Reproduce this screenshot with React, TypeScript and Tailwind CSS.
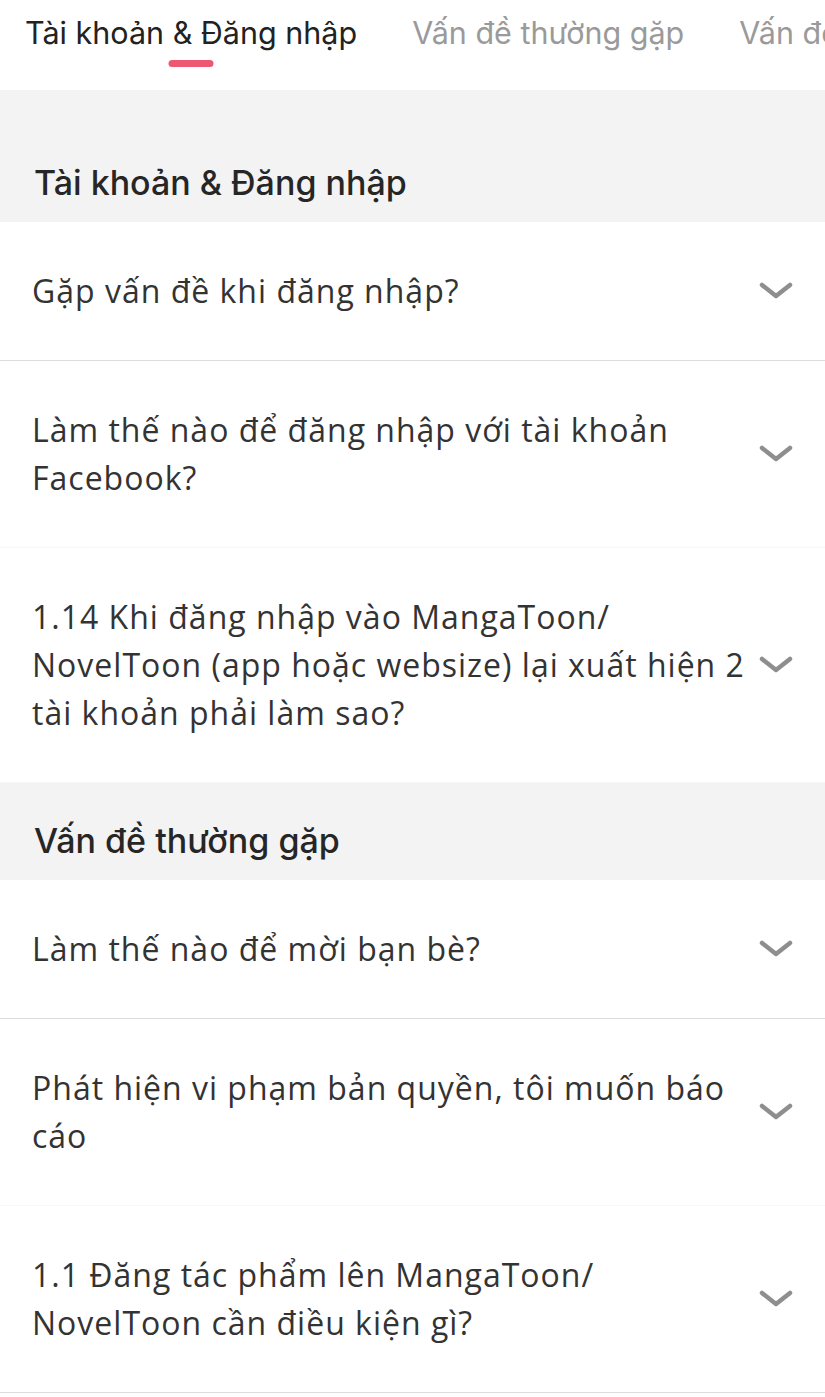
import React from "react";

const sections = [
  {
    title: "Tài khoản & Đăng nhập",
    items: [
      { q: "Gặp vấn đề khi đăng nhập?", line: true },
      { q: "Làm thế nào để đăng nhập với tài khoản Facebook?", line: false },
      {
        q: "1.14 Khi đăng nhập vào MangaToon/ NovelToon (app hoặc websize) lại xuất hiện 2 tài khoản phải làm sao?",
        line: false,
      },
    ],
  },
  {
    title: "Vấn đề thường gặp",
    items: [
      { q: "Làm thế nào để mời bạn bè?", line: true },
      { q: "Phát hiện vi phạm bản quyền, tôi muốn báo cáo", line: false },
      { q: "1.1 Đăng tác phẩm lên MangaToon/ NovelToon cần điều kiện gì?", line: true },
    ],
  },
];

function Chevron() {
  return (
    <svg width="36" height="20" viewBox="0 0 36 20" className="shrink-0">
      <path
        d="M4 4 L18 15 L32 4"
        fill="none"
        stroke="#8e8e8e"
        strokeWidth="4.5"
        strokeLinecap="round"
        strokeLinejoin="round"
      />
    </svg>
  );
}

export default function App() {
  return (
    <div className="w-[825px] h-[1397px] overflow-hidden bg-white">
      {/* tabs */}
      <div className="h-[90px] flex items-start pl-[25px] gap-[55px] whitespace-nowrap overflow-hidden font-['Inter',sans-serif] text-[30.5px]">
        <div className="relative shrink-0 pt-[10px] text-[#222]">
          Tài khoản &amp; Đăng nhập
          <div className="absolute left-1/2 -translate-x-1/2 top-[60px] w-[45px] h-[7px] rounded-full bg-[#ec5873]" />
        </div>
        <div className="shrink-0 pt-[10px] text-[#9a9a9a]">Vấn đề thường gặp</div>
        <div className="shrink-0 pt-[10px] text-[#9a9a9a]">Vấn đề khác</div>
      </div>

      {sections.map((s, si) => (
        <div key={s.title}>
          <div
            className={
              "bg-[#f3f3f3] px-[34px] pb-[19px] font-['Inter',sans-serif] text-[34px] font-medium text-[#262626] leading-[40px] " +
              (si === 0 ? "pt-[73px]" : "pt-[38px]")
            }
          >
            {s.title}
          </div>
          {s.items.map((it) => (
            <div
              key={it.q}
              className={
                "flex items-center justify-between pl-[32px] pr-[31px] py-[45px] border-b " +
                (it.line ? "border-[#dcdcdc]" : "border-[#f7f7f7]")
              }
            >
              <div className="flex-1 pr-[8px] font-['Open_Sans',sans-serif] text-[32px] tracking-[1px] leading-[48px] text-[#333]">
                {it.q}
              </div>
              <Chevron />
            </div>
          ))}
        </div>
      ))}
    </div>
  );
}
